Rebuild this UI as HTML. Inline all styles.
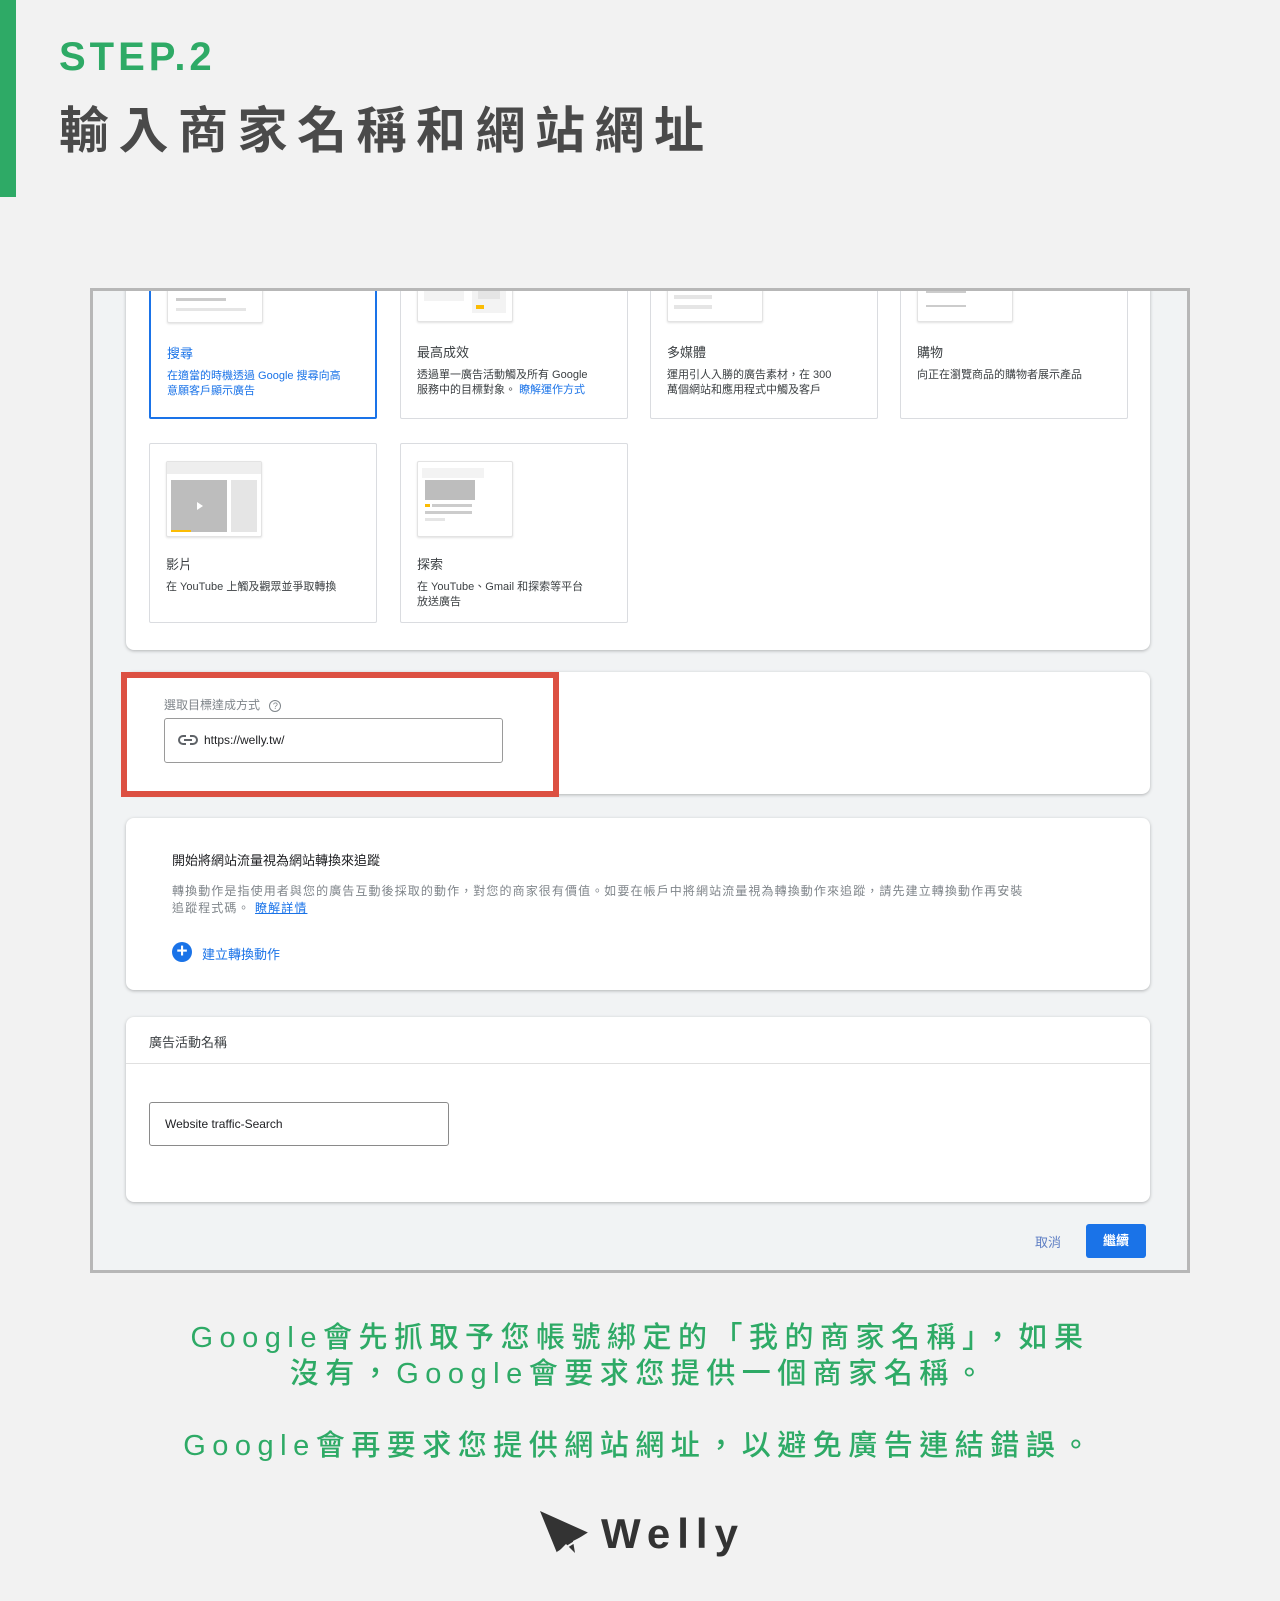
<!DOCTYPE html>
<html><head><meta charset="utf-8">
<style>
*{margin:0;padding:0;box-sizing:border-box}
body{width:1280px;height:1601px;background:#f2f2f2;position:relative;overflow:hidden;font-family:"Liberation Sans","Noto Sans CJK TC",sans-serif}
.abs{position:absolute}
.bar{left:0;top:0;width:16px;height:197px;background:#2eaa66}
.step{left:59px;top:34px;font-size:40px;font-weight:bold;color:#2eaa66;letter-spacing:4px;line-height:46px}
.title{left:59px;top:95px;font-size:50px;font-weight:bold;color:#4a4a4a;letter-spacing:9.5px;line-height:64px;font-family:"Noto Sans CJK TC",sans-serif}
.frame{left:90px;top:288px;width:1100px;height:985px;border:3px solid #b7b7b7;background:#f1f3f4;overflow:hidden}
.panel{position:absolute;background:#fff;border-radius:8px;box-shadow:0 1px 3px rgba(60,64,67,.35)}
.card{position:absolute;width:228px;background:#fff;border:1px solid #dadce0;border-radius:2px}
.card.sel{border:2px solid #1a73e8}
.thumb{position:absolute;left:16px;width:96px;background:#fff;border:1px solid #e3e3e3;border-radius:2px;box-shadow:0 1px 2px rgba(0,0,0,.12)}
.lbl{position:absolute;left:16px;font-size:13px;color:#3c4043}
.dsc{position:absolute;left:16px;width:210px;font-size:11px;line-height:15px;color:#3c4043;white-space:nowrap}
.blue{color:#1a73e8}
.g{position:absolute;background:#e5e5e5}
.y{position:absolute;background:#fbbc04}
.bt{left:0;width:1280px;text-align:center;color:#2eaa66;font-size:29px;letter-spacing:6.5px;line-height:36px;font-weight:500}
</style></head><body>
<div class="abs bar"></div>
<div class="abs step">STEP.2</div>
<div class="abs title">輸入商家名稱和網站網址</div>

<div class="abs frame">
 <div class="panel" style="left:33px;top:-20px;width:1024px;height:379px">
  <div class="card sel" style="left:23px;top:0;height:148px">
   <div class="thumb" style="top:-20px;height:70px"><div class="y" style="left:8px;top:22px;width:8px;height:3px"></div><div class="g" style="left:20px;top:22px;width:30px;height:3px"></div><div class="g" style="left:8px;top:32px;width:70px;height:3px"></div><div class="g" style="left:8px;top:44px;width:50px;height:3px;background:#ccc"></div><div class="g" style="left:8px;top:54px;width:70px;height:3px"></div></div>
   <div class="lbl blue" style="top:70px">搜尋</div>
   <div class="dsc blue" style="top:96px">在適當的時機透過 Google 搜尋向高<br>意願客戶顯示廣告</div>
  </div>
  <div class="card" style="left:274px;top:0;height:148px">
   <div class="thumb" style="top:-20px;height:70px"><div class="g" style="left:6px;top:18px;width:40px;height:30px;background:#f3f3f3"></div><div class="y" style="left:10px;top:22px;width:10px;height:4px"></div><div class="g" style="left:54px;top:20px;width:34px;height:40px;background:#f3f3f3"></div><div class="g" style="left:60px;top:24px;width:22px;height:22px"></div><div class="y" style="left:58px;top:52px;width:8px;height:4px"></div></div>
   <div class="lbl" style="top:70px">最高成效</div>
   <div class="dsc" style="top:96px">透過單一廣告活動觸及所有 Google<br>服務中的目標對象。 <span class="blue">瞭解運作方式</span></div>
  </div>
  <div class="card" style="left:524px;top:0;height:148px">
   <div class="thumb" style="top:-20px;height:70px"><div class="g" style="left:6px;top:16px;width:38px;height:20px"></div><div class="y" style="left:54px;top:16px;width:8px;height:4px"></div><div class="g" style="left:6px;top:42px;width:38px;height:4px"></div><div class="g" style="left:6px;top:52px;width:38px;height:4px"></div></div>
   <div class="lbl" style="top:70px">多媒體</div>
   <div class="dsc" style="top:96px">運用引人入勝的廣告素材，在 300<br>萬個網站和應用程式中觸及客戶</div>
  </div>
  <div class="card" style="left:774px;top:0;height:148px">
   <div class="thumb" style="top:-20px;height:70px"><div class="g" style="left:8px;top:18px;width:70px;height:2px"></div><div class="g" style="left:8px;top:38px;width:40px;height:2px;background:#ccc"></div><div class="g" style="left:8px;top:52px;width:40px;height:2px;background:#ccc"></div></div>
   <div class="lbl" style="top:70px">購物</div>
   <div class="dsc" style="top:96px">向正在瀏覽商品的購物者展示產品</div>
  </div>
  <div class="card" style="left:23px;top:172px;height:180px">
   <div class="thumb" style="top:17px;height:76px"><div class="g" style="left:0;top:0;width:94px;height:12px;background:#eee"></div><div class="g" style="left:4px;top:18px;width:56px;height:52px;background:#bdbdbd"></div><div style="position:absolute;left:30px;top:40px;border-left:6px solid #fff;border-top:4px solid transparent;border-bottom:4px solid transparent"></div><div class="y" style="left:4px;top:68px;width:20px;height:2px"></div><div class="g" style="left:64px;top:18px;width:26px;height:52px"></div></div>
   <div class="lbl" style="top:110px">影片</div>
   <div class="dsc" style="top:136px">在 YouTube 上觸及觀眾並爭取轉換</div>
  </div>
  <div class="card" style="left:274px;top:172px;height:180px">
   <div class="thumb" style="top:17px;height:76px"><div class="g" style="left:4px;top:6px;width:62px;height:10px;background:#f3f3f3"></div><div class="g" style="left:7px;top:18px;width:50px;height:20px;background:#bdbdbd"></div><div class="y" style="left:7px;top:42px;width:5px;height:3px"></div><div class="g" style="left:14px;top:42px;width:40px;height:3px;background:#ccc"></div><div class="g" style="left:7px;top:49px;width:47px;height:3px;background:#ccc"></div><div class="g" style="left:7px;top:56px;width:20px;height:3px"></div></div>
   <div class="lbl" style="top:110px">探索</div>
   <div class="dsc" style="top:136px">在 YouTube、Gmail 和探索等平台<br>放送廣告</div>
  </div>
 </div>

 <div class="panel" style="left:33px;top:381px;width:1024px;height:122px"></div>
 <div style="position:absolute;left:28px;top:381px;width:438px;height:125px;border:6px solid #dc5042"></div>
 <div style="position:absolute;left:71px;top:405px;font-size:12px;color:#80868b">選取目標達成方式 <span style="display:inline-block;width:12px;height:12px;border:1px solid #80868b;border-radius:50%;font-size:9px;line-height:10px;text-align:center;margin-left:6px">?</span></div>
 <div style="position:absolute;left:71px;top:427px;width:339px;height:45px;border:1px solid #9a9a9a;border-radius:3px;background:#fff">
  <svg style="position:absolute;left:13px;top:14px" width="20" height="14" viewBox="0 0 20 14"><path d="M8 3H5a4 4 0 0 0 0 8h3M12 3h3a4 4 0 0 1 0 8h-3M6 7h8" fill="none" stroke="#5f6368" stroke-width="2"/></svg>
  <span style="position:absolute;left:39px;top:14px;font-size:12px;color:#202124">https://welly.tw/</span>
 </div>

 <div class="panel" style="left:33px;top:527px;width:1024px;height:172px">
  <div style="position:absolute;left:46px;top:32px;font-size:13px;color:#202124">開始將網站流量視為網站轉換來追蹤</div>
  <div style="position:absolute;left:46px;top:65px;width:900px;font-size:12px;line-height:17px;color:#80868b;white-space:nowrap;letter-spacing:1.1px">轉換動作是指使用者與您的廣告互動後採取的動作，對您的商家很有價值。如要在帳戶中將網站流量視為轉換動作來追蹤，請先建立轉換動作再安裝<br>追蹤程式碼。 <span class="blue" style="text-decoration:underline">瞭解詳情</span></div>
  <div style="position:absolute;left:46px;top:124px;width:20px;height:20px;border-radius:50%;background:#1a73e8;color:#fff;font-size:19px;font-weight:bold;line-height:20px;text-align:center">+</div>
  <div style="position:absolute;left:76px;top:126px;font-size:13px" class="blue">建立轉換動作</div>
 </div>

 <div class="panel" style="left:33px;top:726px;width:1024px;height:185px">
  <div style="position:absolute;left:23px;top:15px;font-size:13px;color:#3c4043">廣告活動名稱</div>
  <div style="position:absolute;left:0;top:46px;width:1024px;height:1px;background:#e0e0e0"></div>
  <div style="position:absolute;left:23px;top:85px;width:300px;height:44px;border:1px solid #8a8a8a;border-radius:3px">
   <span style="position:absolute;left:15px;top:14px;font-size:12px;color:#202124">Website traffic-Search</span>
  </div>
 </div>
 <div style="position:absolute;left:942px;top:941px;font-size:13px;color:#5f7fc4">取消</div>
 <div style="position:absolute;left:993px;top:933px;width:60px;height:34px;background:#1a73e8;border-radius:3px;color:#fff;font-size:13px;font-weight:bold;text-align:center;line-height:34px">繼續</div>
</div>

<div class="abs bt" style="top:1320px">Google會先抓取予您帳號綁定的「我的商家名稱」，如果</div>
<div class="abs bt" style="top:1356px">沒有，Google會要求您提供一個商家名稱。</div>
<div class="abs bt" style="top:1428px">Google會再要求您提供網站網址，以避免廣告連結錯誤。</div>

<svg class="abs" style="left:539px;top:1510px" width="52" height="45" viewBox="0 0 52 45"><path d="M1 1 L50 23 L34 31 L36 43 L27 34 L18 43 Z" fill="#333"/><path d="M18 43 L50 23" stroke="#f2f2f2" stroke-width="2"/></svg>
<div class="abs" style="left:601px;top:1510px;font-size:42px;font-weight:bold;color:#333;letter-spacing:7px;line-height:48px">Welly</div>
</body></html>
